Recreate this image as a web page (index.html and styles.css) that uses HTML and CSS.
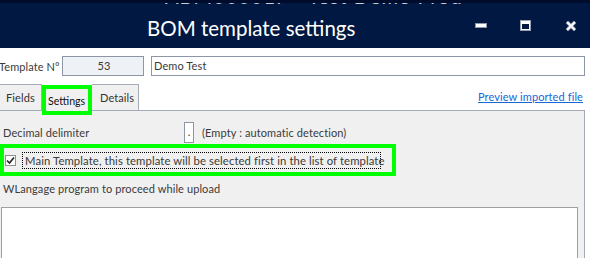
FILE: index.html
```html
<!DOCTYPE html>
<html>
<head>
    <meta name="viewport" content="width=device-width, initial-scale=1.0">
    <link rel="stylesheet" href="styles.css">
</head>
<body>
<div class="titlebar">
    <span class="ghost">ABM00001F - Test Demo Prod</span>
    <h1 class="title">BOM template settings</h1>
    <div class="controls">
        <svg class="ctl" width="12" height="12" viewBox="0 0 12 12">
            <rect x="0.5" y="3.5" width="11" height="4" fill="#ffffff" stroke="#8d96a8"/>
        </svg>
        <svg class="ctl" width="12" height="12" viewBox="0 0 12 12">
            <rect x="0.5" y="0.5" width="10" height="10" fill="none" stroke="#9aa3b4"/>
            <rect x="1.5" y="1.5" width="8" height="8" fill="none" stroke="#ffffff"/>
            <rect x="2" y="2" width="7" height="2" fill="#ffffff"/>
        </svg>
        <svg class="ctl" width="12" height="12" viewBox="0 0 12 12">
            <path d="M2 2 L10 10 M10 2 L2 10" stroke="#8d96a8" stroke-width="3.6"/>
            <path d="M2 2 L10 10 M10 2 L2 10" stroke="#ffffff" stroke-width="1.8"/>
        </svg>
    </div>
</div>

<div class="form-row">
    <label class="row-label">Template N°</label>
    <div class="field field-num">53</div>
    <div class="field field-name">Demo Test</div>
</div>

<div class="tabs-row">
    <div class="tab tab-fields">Fields</div>
    <div class="tab tab-active">Settings</div>
    <div class="tab tab-details">Details</div>
    <a class="preview-link" href="#">Preview imported file</a>
</div>

<div class="panel">
    <div class="delim-row">
        <span class="delim-label">Decimal delimiter</span>
        <div class="field field-delim">.</div>
        <span class="delim-hint">(Empty : automatic detection)</span>
    </div>

    <div class="main-box">
        <span class="checkbox">
            <svg width="9" height="9" viewBox="0 0 9 9">
                <path d="M1 4.5 L3.5 7 L8 1.5" fill="none" stroke="#222" stroke-width="1.6"/>
            </svg>
        </span>
        <span class="main-label">Main Template, this template will be selected first in the list of template</span>
    </div>

    <p class="wl-label">WLangage program to proceed while upload</p>
    <div class="code-area"></div>
</div>
</body>
</html>
```

FILE: styles.css
```css
body {
    margin: 0;
    width: 590px;
    height: 258px;
    overflow: hidden;
    background: #ffffff;
    font-family: Lato, "Liberation Sans", sans-serif;
    font-size: 11px;
    letter-spacing: 0.1px;
    color: #3a3a3a;
}

.titlebar {
    position: relative;
    height: 48px;
    background: #001842;
    border-top: 3px solid #000c2c;
    box-sizing: border-box;
    display: flex;
    align-items: center;
    overflow: hidden;
}

.ghost {
    position: absolute;
    top: -19px;
    left: 165px;
    font-size: 20px;
    color: #c9cfdc;
    letter-spacing: 1px;
}

.title {
    margin: 0 0 0 147px;
    font-size: 20.5px;
    font-weight: normal;
    letter-spacing: 0;
    color: #ffffff;
    padding-top: 4px;
}

.controls {
    margin-left: auto;
    margin-right: 13px;
    display: flex;
    gap: 33px;
    padding-top: 1px;
}

.form-row {
    display: flex;
    align-items: center;
    margin-top: 8px;
    height: 20px;
}

.row-label {
    flex-shrink: 0;
    width: 63px;
    margin-left: -1px;
    white-space: nowrap;
}

.field {
    flex-shrink: 0;
    box-sizing: border-box;
    border: 1px solid #8c96a6;
    background: #ffffff;
    height: 20px;
    line-height: 18px;
    padding-left: 2px;
}

.field-num {
    width: 82px;
    background: #eef1f6;
    text-align: center;
}

.field-name {
    margin-left: 7px;
    width: 434px;
}

.tabs-row {
    display: flex;
    align-items: flex-start;
    margin-top: 8px;
    height: 26px;
}

.tab {
    flex-shrink: 0;
    box-sizing: border-box;
    height: 26px;
    line-height: 26px;
    background: #f0f0f0;
    border-top: 1px solid #a4abb6;
    border-right: 1px solid #a4abb6;
    color: #333;
    white-space: nowrap;
}

.tab-fields {
    width: 42px;
    padding-left: 6px;
}

.tab-details {
    width: 47px;
    padding-left: 8px;
}

.tab-active {
    position: relative;
    z-index: 1;
    width: 50px;
    height: 30px;
    margin-top: 1px;
    margin-bottom: -5px;
    border: 4px solid #00ff00;
    line-height: 25px;
    padding-left: 2px;
    font-size: 10.6px;
    letter-spacing: 0;
    color: #111;
}

.preview-link {
    margin-left: auto;
    margin-right: 7px;
    margin-top: 6px;
    font-size: 11px;
    color: #1668d8;
}

.panel {
    height: 200px;
    width: 585px;
    box-sizing: border-box;
    background: #f0f0f0;
    border-top: 1px solid #a4abb6;
    border-right: 1px solid #a4abb6;
    overflow: hidden;
}

.delim-row {
    display: flex;
    align-items: center;
    margin-top: 11px;
    height: 21px;
}

.delim-label {
    width: 181px;
    margin-left: 3px;
}

.field-delim {
    width: 10px;
    height: 21px;
    padding: 0;
    text-align: center;
}

.delim-hint {
    margin-left: 8px;
}

.main-box {
    margin-top: 1px;
    box-sizing: border-box;
    width: 396px;
    height: 32px;
    border: 4px solid #00ff00;
    display: flex;
    align-items: center;
}

.checkbox {
    box-sizing: border-box;
    width: 11px;
    height: 11px;
    margin-left: 1px;
    border: 1px solid #8f8f8f;
    background: #ffffff;
    display: flex;
    align-items: center;
    justify-content: center;
}

.main-label {
    margin-left: 6px;
    padding: 0 2px;
    height: 17px;
    line-height: 15px;
    box-sizing: border-box;
    border: 1px dotted #000000;
    width: 359px;
    white-space: nowrap;
    font-size: 11.3px;
}

.wl-label {
    margin: 6px 0 0 3px;
    height: 14px;
    line-height: 14px;
}

.code-area {
    margin: 11px 0 0 1px;
    width: 577px;
    height: 60px;
    box-sizing: border-box;
    background: #ffffff;
    border: 1px solid #a0a0a0;
}
```
